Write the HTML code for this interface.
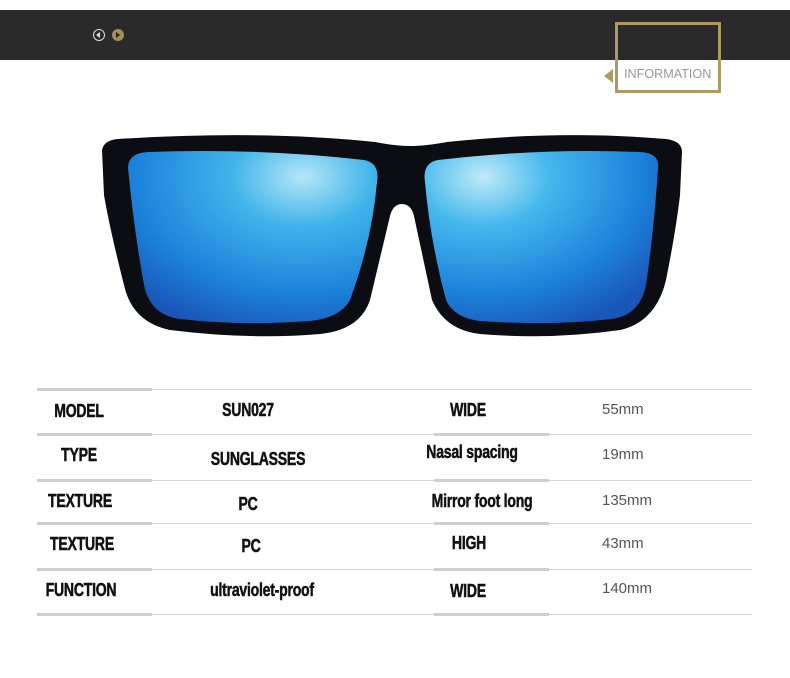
<!DOCTYPE html>
<html><head><meta charset="utf-8"><style>
*{margin:0;padding:0;box-sizing:border-box}
body{width:790px;height:678px;background:#fff;position:relative;overflow:hidden;font-family:"Liberation Sans",sans-serif}
.bar{position:absolute;left:0;top:10px;width:790px;height:50px;background:#2a2a2a}
.b{position:absolute;font-family:"Liberation Sans Narrow","Liberation Sans",sans-serif;font-weight:bold;font-size:18px;color:#111;white-space:nowrap;transform:translateX(-50%) scaleX(0.78);letter-spacing:-0.3px;-webkit-text-stroke:0.5px #111}
.v{position:absolute;font-size:15px;color:#555;white-space:nowrap}
.ln{position:absolute;left:37px;width:715px;height:1px;background:#d6d6d6}
.tk{position:absolute;height:3px;background:#cfcfcf}
</style></head><body>
<div class="bar"></div>
<div style="position:absolute;left:93px;top:29px;width:12px;height:12px;border:1.3px solid #ddd;border-radius:50%"></div>
<div style="position:absolute;left:96px;top:32px;width:0;height:0;border-top:3px solid transparent;border-bottom:3px solid transparent;border-right:4px solid #ddd"></div>
<div style="position:absolute;left:112px;top:29px;width:12px;height:12px;background:#a88d5a;border-radius:50%"></div>
<div style="position:absolute;left:116px;top:32px;width:0;height:0;border-top:3px solid transparent;border-bottom:3px solid transparent;border-left:4px solid #222"></div>
<div style="position:absolute;left:615px;top:22px;width:106px;height:71px;border:3px solid #b09a64"></div>
<div style="position:absolute;left:604px;top:69px;width:0;height:0;border-top:7px solid transparent;border-bottom:7px solid transparent;border-right:9px solid #b09a64"></div>
<div style="position:absolute;left:624px;top:66px;font-size:13px;color:#999;transform-origin:left;transform:scaleX(0.97)">INFORMATION</div>

<svg style="position:absolute;left:0;top:0" width="790" height="380">
<defs>
<radialGradient id="g1" cx="0.7" cy="0.15" r="0.95"><stop offset="0" stop-color="#b5e6f7"/><stop offset="0.3" stop-color="#40b4ea"/><stop offset="0.7" stop-color="#1d84dc"/><stop offset="1" stop-color="#1a55b8"/></radialGradient>
<radialGradient id="g2" cx="0.25" cy="0.15" r="0.95"><stop offset="0" stop-color="#c0eaf8"/><stop offset="0.3" stop-color="#44b8ec"/><stop offset="0.7" stop-color="#1d84dc"/><stop offset="1" stop-color="#1a55b8"/></radialGradient>
</defs>
<path d="M102 150 Q104 140 118 139 Q260 130 375 142 Q395 146 410 146 Q425 146 447 142 Q560 130 666 139 Q682 141 682 152 L680 195 Q676 230 666 280 Q656 322 620 330 Q550 340 480 334 Q445 330 432 300 L414 216 Q411 204 402 204 Q393 204 390 216 L370 300 Q360 330 320 334 Q250 340 170 330 Q132 322 124 285 Q110 230 104 195 Z" fill="#0b0d12"/>
<path d="M128 168 Q128 153 148 152 Q260 148 364 160 Q380 163 377 182 Q372 240 350 300 Q340 318 310 321 Q240 326 180 319 Q150 315 144 285 Q134 230 128 168 Z" fill="url(#g1)"/>
<path d="M425 182 Q422 163 438 160 Q540 148 640 152 Q660 153 658 168 Q654 230 646 285 Q640 315 612 319 Q550 326 480 321 Q454 318 446 300 Q430 240 425 182 Z" fill="url(#g2)"/>
</svg>

<div class="ln" style="top:389px"></div>
<div class="ln" style="top:434px"></div>
<div class="ln" style="top:480px"></div>
<div class="ln" style="top:523px"></div>
<div class="ln" style="top:569px"></div>
<div class="ln" style="top:614px"></div>
<div class="tk" style="left:37px;width:115px;top:388px"></div>
<div class="tk" style="left:37px;width:115px;top:433px"></div>
<div class="tk" style="left:37px;width:115px;top:479px"></div>
<div class="tk" style="left:37px;width:115px;top:522px"></div>
<div class="tk" style="left:37px;width:115px;top:568px"></div>
<div class="tk" style="left:37px;width:115px;top:613px"></div>
<div class="tk" style="left:434px;width:115px;top:433px"></div>
<div class="tk" style="left:434px;width:115px;top:479px"></div>
<div class="tk" style="left:434px;width:115px;top:522px"></div>
<div class="tk" style="left:434px;width:115px;top:568px"></div>
<div class="tk" style="left:434px;width:115px;top:613px"></div>

<div class="b" style="left:79px;top:401px">MODEL</div>
<div class="b" style="left:248px;top:400px">SUN027</div>
<div class="b" style="left:468px;top:400px">WIDE</div>
<div class="v" style="left:602px;top:401px">55mm</div>

<div class="b" style="left:79px;top:445px">TYPE</div>
<div class="b" style="left:258px;top:449px">SUNGLASSES</div>
<div class="b" style="left:472px;top:442px">Nasal spacing</div>
<div class="v" style="left:602px;top:446px">19mm</div>

<div class="b" style="left:80px;top:491px">TEXTURE</div>
<div class="b" style="left:248px;top:494px">PC</div>
<div class="b" style="left:482px;top:491px">Mirror foot long</div>
<div class="v" style="left:602px;top:492px">135mm</div>

<div class="b" style="left:82px;top:534px">TEXTURE</div>
<div class="b" style="left:251px;top:536px">PC</div>
<div class="b" style="left:469px;top:533px">HIGH</div>
<div class="v" style="left:602px;top:535px">43mm</div>

<div class="b" style="left:81px;top:580px">FUNCTION</div>
<div class="b" style="left:262px;top:580px">ultraviolet-proof</div>
<div class="b" style="left:468px;top:581px">WIDE</div>
<div class="v" style="left:602px;top:580px">140mm</div>
</body></html>
